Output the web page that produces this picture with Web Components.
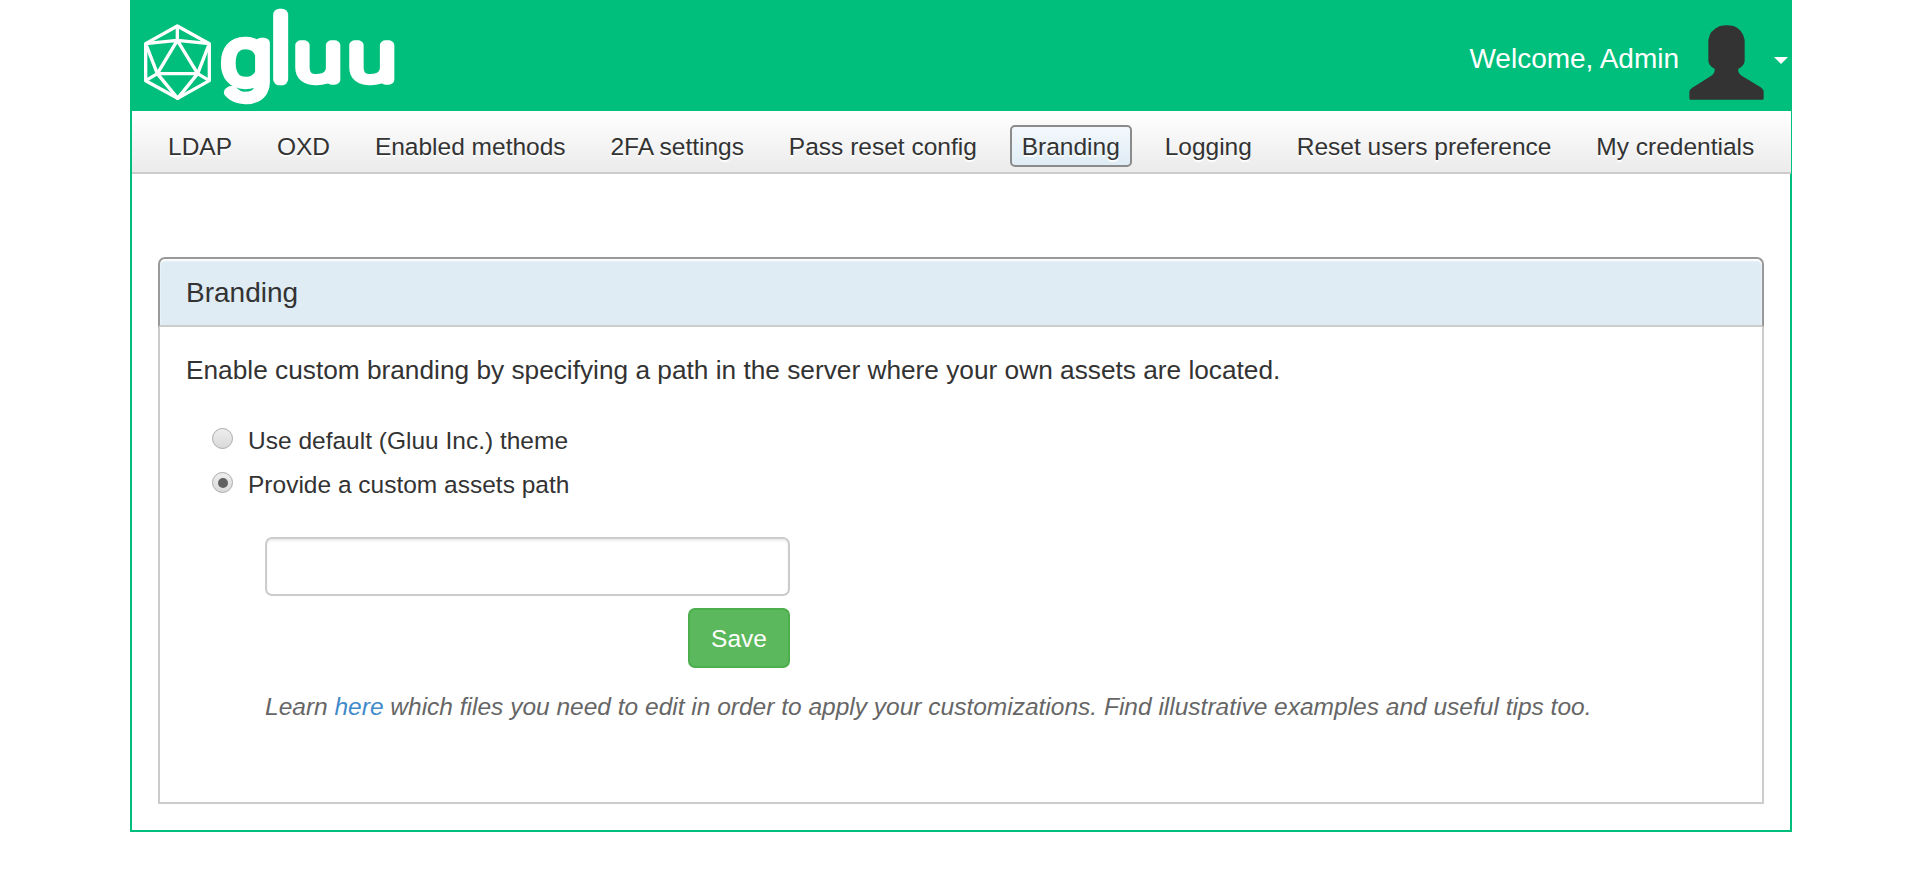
<!DOCTYPE html>
<html lang="en">
<head>
<meta charset="utf-8">
<title>Branding</title>
<style>
body{margin:0;background:#fff;font-family:"Liberation Sans",Arial,sans-serif;font-size:24.5px;color:#333}
</style>
</head>
<body>
<app-shell>
  <app-header slot="top"></app-header>
  <nav-bar slot="top">
    <nav-item>LDAP</nav-item><nav-item>OXD</nav-item><nav-item>Enabled methods</nav-item><nav-item>2FA settings</nav-item><nav-item>Pass reset config</nav-item><nav-item active>Branding</nav-item><nav-item>Logging</nav-item><nav-item>Reset users preference</nav-item><nav-item>My credentials</nav-item>
  </nav-bar>
  <content-panel heading="Branding"><branding-form></branding-form></content-panel>
</app-shell>
<script>
const define = (name, html) => customElements.define(name, class extends HTMLElement {
  constructor() {
    super();
    this.attachShadow({mode: 'open'}).innerHTML = html;
  }
  connectedCallback() {
    const h = this.shadowRoot.querySelector('[data-heading]');
    if (h) h.textContent = this.getAttribute('heading');
  }
});

define('app-shell', `
<style>
:host{display:block;box-sizing:border-box;width:1662px;height:832px;margin-left:130px;border:2px solid #00bf7c;border-top:0}
.main{padding:83px 26px 0}
</style><slot name="top"></slot><div class="main"><slot></slot></div>`);

define('app-header', `
<style>
:host{display:flex;box-sizing:border-box;height:111px;margin:0 -2px;background:#00bf7c;color:#fff;align-items:flex-start;padding-right:4px}
.logo{display:block;flex:none;overflow:visible}
.who{margin-left:auto;font-size:28px;line-height:32px;padding-top:43px;white-space:nowrap}
.avatar{display:block;margin:25px 10px 0 10px}
.caret{display:block;margin-top:57px}
</style>
<svg class="logo" width="280" height="111" viewBox="30 0 840 333">
  <g fill="none" stroke="#fff" stroke-width="10" stroke-linejoin="round">
    <path d="M172 78L268 131V242L173 295L77 242V131Z"/>
    <path d="M172 78V121M77 131L172 121L268 131M172 121L112 221H233L172 121M77 131L112 221L77 242M268 131L233 221L268 242M112 221L173 295L233 221"/>
  </g>
  <g fill="#fff" stroke="#fff" stroke-linejoin="round" stroke-linecap="round" font-family="Roboto" font-weight="100">
    <text transform="translate(305 249) scale(1.19 1)" font-size="228" stroke-width="31">g</text>
    <text transform="translate(455 236)" font-size="258" stroke-width="38">l</text>
    <text transform="translate(523 240) scale(1.29 1)" font-size="200" stroke-width="28">u</text>
    <text transform="translate(685 240) scale(1.29 1)" font-size="200" stroke-width="28">u</text>
  </g>
</svg>
<span class="who">Welcome, Admin</span>
<svg class="avatar" width="75" height="76" viewBox="747 76 225 228"><path fill="#333" d="M750 300Q748 299 748 294V278Q748 269 757 264L814 228Q825 221 824 207Q806 199 805 183V121Q809 91 840 79Q860 75 881 79Q908 89 914 121V183Q913 199 895 207Q893 221 905 228L962 263Q971 269 971 278V294Q971 299 969 300Z"/></svg>
<svg class="caret" width="14" height="7" viewBox="0 0 14 7"><path fill="#fff" d="M0 0H14L7 7Z"/></svg>`);

define('nav-bar', `
<style>
:host{display:flex;box-sizing:border-box;height:63px;margin-right:-1px;padding:14px 0 0 24px;gap:20.9px;background:linear-gradient(#fff,#ebebeb);border-bottom:2px solid #ccc}
</style><slot></slot>`);

define('nav-item', `
<style>
:host{display:block;box-sizing:border-box;height:42px;line-height:40px;padding:0 10px;border:2px solid transparent;border-radius:5px;white-space:nowrap;text-shadow:0 2px 0 #fff}
:host([active]){border-color:#8b8b8b;background:linear-gradient(#f3f9fd,#dfecf5)}
</style><slot></slot>`);

define('content-panel', `
<style>
:host{display:flex;flex-direction:column;height:547px}
header{box-sizing:border-box;height:70px;padding:0 26px;border:2px solid #999;border-bottom-color:#ccc;border-radius:7px 7px 0 0;background:#dfecf4;box-shadow:inset 0 2px 2px #fff;font-size:28px;line-height:67px}
.body{flex:1;border:2px solid #ccc;border-top:0;padding:26px 26px 0}
</style><header data-heading></header><div class="body"><slot></slot></div>`);

define('branding-form', `
<style>
:host{display:block}
p{margin:0;line-height:34px;white-space:nowrap}
.intro{font-size:26.25px}
.choices{display:grid;gap:8px;margin:36px 0 0 26px}
.field{box-sizing:border-box;width:525px;margin:34px 0 0 79px;display:flex;flex-direction:column;align-items:flex-end;gap:12px}
input{box-sizing:border-box;width:100%;height:59px;padding:0 20px;border:2px solid #ccc;border-radius:7px;font:inherit;background:#fff;box-shadow:inset 0 2px 2px rgba(0,0,0,.075);outline:0}
button{box-sizing:border-box;width:102px;height:60px;padding:1px 0 0;border:2px solid #4cae4c;border-radius:7px;background:#5cb85c;color:#fff;font:inherit}
.hint{margin:22px 0 0 79px;font-style:italic;color:#666}
a{color:#428bca;text-decoration:none}
</style>
<p class="intro">Enable custom branding by specifying a path in the server where your own assets are located.</p>
<div class="choices">
  <radio-choice>Use default (Gluu Inc.) theme</radio-choice>
  <radio-choice checked>Provide a custom assets path</radio-choice>
</div>
<div class="field"><input type="text" aria-label="Assets path"><button>Save</button></div>
<p class="hint">Learn <a href="#">here</a> which files you need to edit in order to apply your customizations. Find illustrative examples and useful tips too.</p>`);

define('radio-choice', `
<style>
:host{display:flex;align-items:flex-start;height:36px;line-height:36px;white-space:nowrap}
i{box-sizing:border-box;flex:none;width:21px;height:21px;margin:5px 15px 0 0;border:1px solid #aaa;border-radius:50%;background:linear-gradient(#eee,#d9d9d9);display:grid;place-items:center}
:host([checked]) i::after{content:"";width:10px;height:10px;border-radius:50%;background:#606060}
</style><i></i><span><slot></slot></span>`);
</script>
</body>
</html>
